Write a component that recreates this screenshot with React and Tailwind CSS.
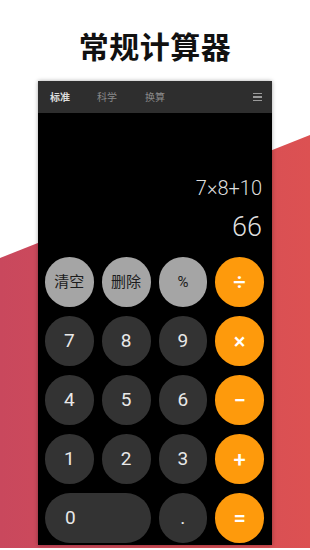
import React from 'react'

const cjk = { fontFamily: 'Roboto, "Noto Sans CJK SC", sans-serif' }

const keys = [
  { label: '清空', kind: 'fn' },
  { label: '删除', kind: 'fn' },
  { label: '%', kind: 'fn' },
  { label: '÷', kind: 'op' },
  { label: '7' }, { label: '8' }, { label: '9' },
  { label: '×', kind: 'op' },
  { label: '4' }, { label: '5' }, { label: '6' },
  { label: '−', kind: 'op' },
  { label: '1' }, { label: '2' }, { label: '3' },
  { label: '+', kind: 'op' },
  { label: '0', kind: 'zero' },
  { label: '.' },
  { label: '=', kind: 'op' },
]

function Key({ label, kind }) {
  if (kind === 'fn') {
    return (
      <div className="h-[50px] rounded-full bg-[#a5a5a5] text-[#1c1c1c] text-[15px] flex items-center justify-center">
        {label}
      </div>
    )
  }
  if (kind === 'op') {
    return (
      <div className="h-[50px] rounded-full bg-[#fe9a0c] text-white text-[22px] font-medium flex items-center justify-center">
        {label}
      </div>
    )
  }
  if (kind === 'zero') {
    return (
      <div className="col-span-2 h-[50px] rounded-full bg-[#333333] text-[#e8e8e8] text-[19px] flex items-center pl-[20px]">
        {label}
      </div>
    )
  }
  return (
    <div className="h-[50px] rounded-full bg-[#333333] text-[#e8e8e8] text-[19px] flex items-center justify-center">
      {label}
    </div>
  )
}

export default function App() {
  return (
    <div className="relative w-[310px] h-[550px] overflow-hidden bg-white" style={cjk}>
      {/* red diagonal backdrop */}
      <div className="absolute inset-x-0 top-0 h-[548px] bg-gradient-to-r from-[#c9485d] to-[#dc5152] [clip-path:polygon(0_258px,100%_135px,100%_100%,0_100%)]" />

      <div className="relative flex flex-col items-center">
        <h1 className="mt-[31px] h-[34px] leading-[34px] text-[30px] font-bold text-[#111] tracking-[0.5px]">
          常规计算器
        </h1>

        <div className="mt-[16px] w-[234px] h-[464px] bg-black flex flex-col shadow-[0_0_4px_rgba(0,0,0,0.35)]">
          {/* tabs */}
          <div className="h-[32px] bg-[#2e2e2e] flex items-center px-[12px] text-[10px]">
            <span className="text-[#dcdcdc] font-bold">标准</span>
            <span className="ml-[27px] text-[#8a8a8a]">科学</span>
            <span className="ml-[28px] text-[#8a8a8a]">换算</span>
            <div className="ml-auto mr-[-2px] flex flex-col gap-[2px]">
              <span className="block w-[9px] h-[1.5px] bg-[#9a9a9a]" />
              <span className="block w-[9px] h-[1.5px] bg-[#9a9a9a]" />
              <span className="block w-[9px] h-[1.5px] bg-[#9a9a9a]" />
            </div>
          </div>

          {/* display */}
          <div className="h-[144px] flex flex-col items-end justify-end pr-[10px] pb-[15px] text-[#dedede] font-light">
            <div className="text-[20px] leading-[24px]">7×8+10</div>
            <div className="mt-[12px] text-[27px] leading-[30px]">66</div>
          </div>

          {/* keypad */}
          <div className="grid grid-cols-4 gap-x-[8px] gap-y-[9px] px-[7px] pr-[8px]">
            {keys.map((k, i) => (
              <Key key={i} {...k} />
            ))}
          </div>
        </div>
      </div>
    </div>
  )
}
